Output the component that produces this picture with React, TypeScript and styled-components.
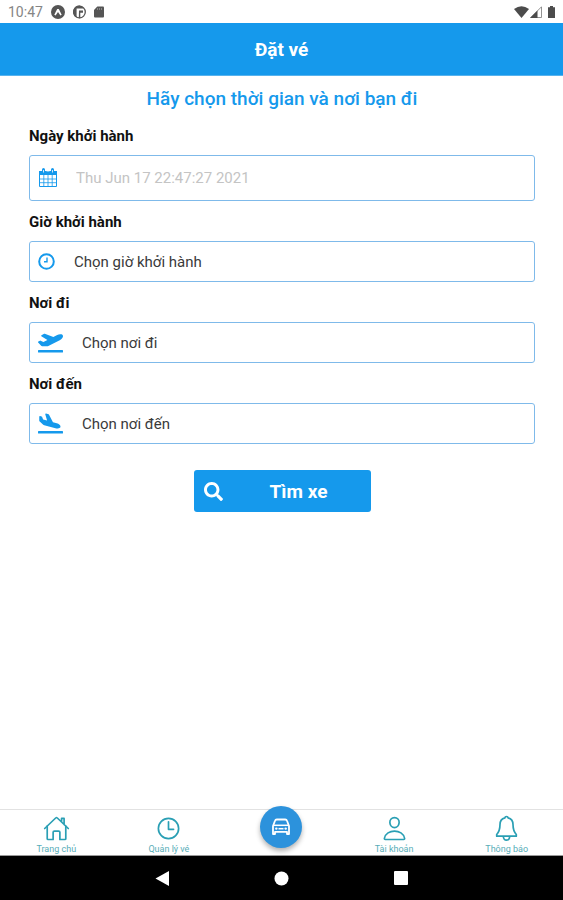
import React from "react";
import styled, { createGlobalStyle } from "styled-components";
import { FaPlaneArrival, FaPlaneDeparture, FaSearch } from "react-icons/fa";
import { IoHomeOutline, IoPersonOutline, IoTimeOutline } from "react-icons/io5";

const blue = "#1599ec";
const teal = "#2a9fb4";

const GlobalStyle = createGlobalStyle`
  * { box-sizing: border-box; }
  body {
    margin: 0;
    background: #fff;
    font-family: Roboto, "Noto Sans", sans-serif;
  }
  button, input, select { font-family: inherit; }
`;

const Screen = styled.div`
  display: flex;
  flex-direction: column;
  min-height: 100vh;
`;

const StatusBar = styled.div`
  display: flex;
  align-items: center;
  justify-content: space-between;
  height: 23px;
  padding: 0 8px;
  color: #858585;
  font-size: 14px;
`;

const StatusGroup = styled.div<{ $gap: number }>`
  display: flex;
  align-items: center;
  gap: ${(p) => p.$gap}px;
`;

const Header = styled.header`
  display: flex;
  align-items: center;
  justify-content: center;
  height: 53px;
  background: ${blue};
  border-bottom: 1px solid #57b3ee;
`;

const HeaderTitle = styled.h1`
  margin: 0;
  color: #fff;
  font-size: 19px;
  font-weight: 700;
`;

const Content = styled.main`
  flex: 1;
  padding: 11px 28px 24px 29px;
`;

const Prompt = styled.h2`
  margin: 0 0 15px;
  color: ${blue};
  font-size: 19px;
  line-height: 24px;
  font-weight: 500;
  text-align: center;
`;

const Form = styled.form`
  display: flex;
  flex-direction: column;
  gap: 11px;
`;

const Field = styled.div`
  display: flex;
  flex-direction: column;
  gap: 9px;
`;

const Label = styled.label`
  color: #111;
  font-size: 15px;
  line-height: 20px;
  font-weight: 700;
`;

const Box = styled.div<{ $height: number; $gap: number }>`
  display: flex;
  align-items: center;
  gap: ${(p) => p.$gap}px;
  height: ${(p) => p.$height}px;
  padding: 0 8px;
  border: 1px solid #7fbaea;
  border-radius: 3px;
  color: ${blue};

  svg { flex: none; }
`;

const TextInput = styled.input`
  flex: 1;
  min-width: 0;
  padding: 0;
  border: 0;
  outline: 0;
  background: none;
  font-size: 15px;
  line-height: 20px;

  &::placeholder { color: #c4c4c4; }
`;

const Picker = styled.select`
  flex: 1;
  min-width: 0;
  padding: 0;
  border: 0;
  outline: 0;
  appearance: none;
  background: none;
  color: #3a3a3a;
  font-size: 15px;
  line-height: 20px;
`;

const SearchButton = styled.button`
  display: flex;
  align-items: center;
  align-self: center;
  width: 177px;
  height: 42px;
  margin-top: 15px;
  padding: 0 10px;
  border: 0;
  border-radius: 3px;
  background: ${blue};
  color: #fff;
  font-size: 19px;
  font-weight: 700;
`;

const ButtonText = styled.span`
  flex: 1;
  padding-left: 14px;
  text-align: center;
`;

const TabBar = styled.nav`
  display: grid;
  grid-template-columns: repeat(5, 1fr);
  height: 47px;
  border-top: 1px solid #e2e2e2;
  border-bottom: 1px solid #999;
`;

const Tab = styled.a`
  display: flex;
  flex-direction: column;
  align-items: center;
  padding-top: 5px;
  color: ${teal};
  font-size: 9px;
  line-height: 10px;
  text-decoration: none;

  svg { margin-bottom: 2px; }
`;

const TabText = styled.span`
  color: #58adb8;
`;

const MainTab = styled.a`
  display: flex;
  align-items: center;
  justify-content: center;
  justify-self: center;
  width: 42px;
  height: 42px;
  margin-top: -4px;
  border-radius: 50%;
  background: #2c92dc;
  box-shadow: 0 3px 5px rgba(0, 0, 0, 0.3);
  color: #fff;
`;

const SystemBar = styled.div`
  display: flex;
  align-items: center;
  justify-content: center;
  gap: 104px;
  height: 44px;
  background: #000;
`;

const SystemButton = styled.button`
  display: flex;
  padding: 0;
  border: 0;
  background: none;
`;

const CalendarIcon = () => (
  <svg width="20" height="20" viewBox="0 0 20 20" fill="none" stroke="currentColor">
    <path d="M1.5 3.5h17v15h-17z" strokeWidth="1" />
    <path d="M1 3h18v4H1z" fill="currentColor" stroke="none" />
    <path d="M1.500 11h17M1.500 14.700h17M5.800 7v11.500M10 7v11.500M14.200 7v11.500" strokeWidth="0.800" />
    <path d="M5.500 1.500v3.500M14.500 1.500v3.500" strokeWidth="3" strokeLinecap="round" />
    <path d="M5.500 2v2.500M14.500 2v2.500M8.500 3h3" stroke="#fff" strokeWidth="0.800" />
  </svg>
);

const ClockIcon = () => (
  <svg width="17" height="17" viewBox="0 0 17 17" fill="none" stroke="currentColor">
    <circle cx="8.5" cy="8.5" r="7.3" strokeWidth="2" />
    <path d="M9 4.5v4.3H6" strokeWidth="1.4" />
  </svg>
);

const BellIcon = () => (
  <svg width="27" height="27" viewBox="0 0 27 27" fill="none" stroke="currentColor" strokeWidth="1.7" strokeLinejoin="round">
    <path d="M13.500 1.500c-.9 0-1.500.6-1.600 1.400C8.700 3.700 7 6.300 7 9.600c0 5-1.100 7.600-3.300 9.900v1.700h19.600v-1.700C21.100 17.200 20 14.600 20 9.600c0-3.300-1.700-5.900-4.900-6.700-.1-.8-.7-1.400-1.600-1.400z" />
    <path d="M10.300 21.200c.2 2.700 1.500 4 3.200 4s3-1.300 3.200-4" />
  </svg>
);

const CarIcon = () => (
  <svg width="20" height="18" viewBox="0 0 20 18" fill="none" stroke="currentColor" strokeLinejoin="round">
    <path d="M2 8 4 2.800Q4.400 1.500 5.800 1.500h8.400q1.400 0 1.800 1.300L18 8v8h-2v-2.200H4V16H2z" strokeWidth="1.800" />
    <path d="M2.500 7.300h15" strokeWidth="1.500" />
    <path d="M7.500 10.700h5" strokeWidth="1.500" />
    <circle cx="5.300" cy="10.600" r="1.200" fill="currentColor" stroke="none" />
    <circle cx="14.700" cy="10.600" r="1.200" fill="currentColor" stroke="none" />
  </svg>
);

const ExpoIcon = () => (
  <svg width="14" height="14" viewBox="0 0 14 14">
    <circle cx="7" cy="7" r="7" fill="#555" />
    <path d="M3.300 9.800 6.200 4h1.600l2.900 5.800-1.300.6L7 7l-2.400 3.400z" fill="#fff" />
  </svg>
);

const DebugIcon = () => (
  <svg width="13" height="14" viewBox="0 0 13 14">
    <circle cx="6.500" cy="7" r="5.800" fill="#fff" stroke="#555" strokeWidth="1.300" />
    <path d="M6.500.5A6.500 6.500 0 0 0 3.600 12.800V3.600H11A6.500 6.500 0 0 0 6.500.5z" fill="#555" />
    <path d="M6 5.500h4v2.200H7.300v5.500H5.800z" fill="#555" />
  </svg>
);

const CardIcon = () => (
  <svg width="10" height="12" viewBox="0 0 10 12">
    <path d="M3.300.5H9q1 0 1 1v9q0 1-1 1H1q-1 0-1-1V4z" fill="#555" />
    <path d="M3.500 2v2M5.500 2v2M7.500 2v2" stroke="#888" />
  </svg>
);

const WifiIcon = () => (
  <svg width="15" height="12" viewBox="0 0 15 12">
    <path d="M0 3Q7.500-2.500 15 3L7.500 12z" fill="#4c4c4c" />
  </svg>
);

const SignalIcon = () => (
  <svg width="12" height="12" viewBox="0 0 12 12">
    <path d="M.8 11.500 11.500.8v10.700z" fill="#fff" stroke="#777" strokeWidth="0.800" />
    <path d="M0 12 7.500 4.500V12z" fill="#4c4c4c" />
  </svg>
);

const BatteryIcon = () => (
  <svg width="7" height="12" viewBox="0 0 7 12">
    <path d="M2 0h3v1.300h2V12H0V1.300h2z" fill="#4c4c4c" />
  </svg>
);

type PickerFieldProps = {
  id: string;
  label: string;
  prompt: string;
  icon: React.ReactNode;
  gap: number;
};

const PickerField = ({ id, label, prompt, icon, gap }: PickerFieldProps) => (
  <Field>
    <Label htmlFor={id}>{label}</Label>
    <Box $height={41} $gap={gap}>
      {icon}
      <Picker id={id} defaultValue="">
        <option value="">{prompt}</option>
      </Picker>
    </Box>
  </Field>
);

export default function App() {
  return (
    <>
      <GlobalStyle />
      <Screen>
        <StatusBar>
          <StatusGroup $gap={8}>
            <span>10:47</span>
            <ExpoIcon />
            <DebugIcon />
            <CardIcon />
          </StatusGroup>
          <StatusGroup $gap={6}>
            <StatusGroup $gap={1}>
              <WifiIcon />
              <SignalIcon />
            </StatusGroup>
            <BatteryIcon />
          </StatusGroup>
        </StatusBar>
        <Header>
          <HeaderTitle>Đặt vé</HeaderTitle>
        </Header>
        <Content>
          <Prompt>Hãy chọn thời gian và nơi bạn đi</Prompt>
          <Form onSubmit={(e) => e.preventDefault()}>
            <Field>
              <Label htmlFor="date">Ngày khởi hành</Label>
              <Box $height={46} $gap={18}>
                <CalendarIcon />
                <TextInput id="date" placeholder="Thu Jun 17 22:47:27 2021" />
              </Box>
            </Field>
            <PickerField id="time" label="Giờ khởi hành" prompt="Chọn giờ khởi hành" icon={<ClockIcon />} gap={19} />
            <PickerField id="from" label="Nơi đi" prompt="Chọn nơi đi" icon={<FaPlaneDeparture size={25} />} gap={19} />
            <PickerField id="to" label="Nơi đến" prompt="Chọn nơi đến" icon={<FaPlaneArrival size={25} />} gap={19} />
            <SearchButton type="submit">
              <FaSearch size={19} />
              <ButtonText>Tìm xe</ButtonText>
            </SearchButton>
          </Form>
        </Content>
        <TabBar>
          <Tab href="#home">
            <IoHomeOutline size={27} />
            <TabText>Trang chủ</TabText>
          </Tab>
          <Tab href="#tickets">
            <IoTimeOutline size={27} />
            <TabText>Quản lý vé</TabText>
          </Tab>
          <MainTab href="#booking" aria-label="Đặt vé">
            <CarIcon />
          </MainTab>
          <Tab href="#account">
            <IoPersonOutline size={27} />
            <TabText>Tài khoản</TabText>
          </Tab>
          <Tab href="#notifications">
            <BellIcon />
            <TabText>Thông báo</TabText>
          </Tab>
        </TabBar>
        <SystemBar>
          <SystemButton aria-label="Back">
            <svg width="16" height="17" viewBox="0 0 16 17">
              <path d="M15 1v15L1.500 8.500z" fill="#fff" />
            </svg>
          </SystemButton>
          <SystemButton aria-label="Home">
            <svg width="15" height="15" viewBox="0 0 15 15">
              <circle cx="7.500" cy="7.500" r="7" fill="#fff" />
            </svg>
          </SystemButton>
          <SystemButton aria-label="Recent apps">
            <svg width="16" height="16" viewBox="0 0 16 16">
              <rect x="1" y="1" width="14" height="14" rx="1" fill="#fff" />
            </svg>
          </SystemButton>
        </SystemBar>
      </Screen>
    </>
  );
}
